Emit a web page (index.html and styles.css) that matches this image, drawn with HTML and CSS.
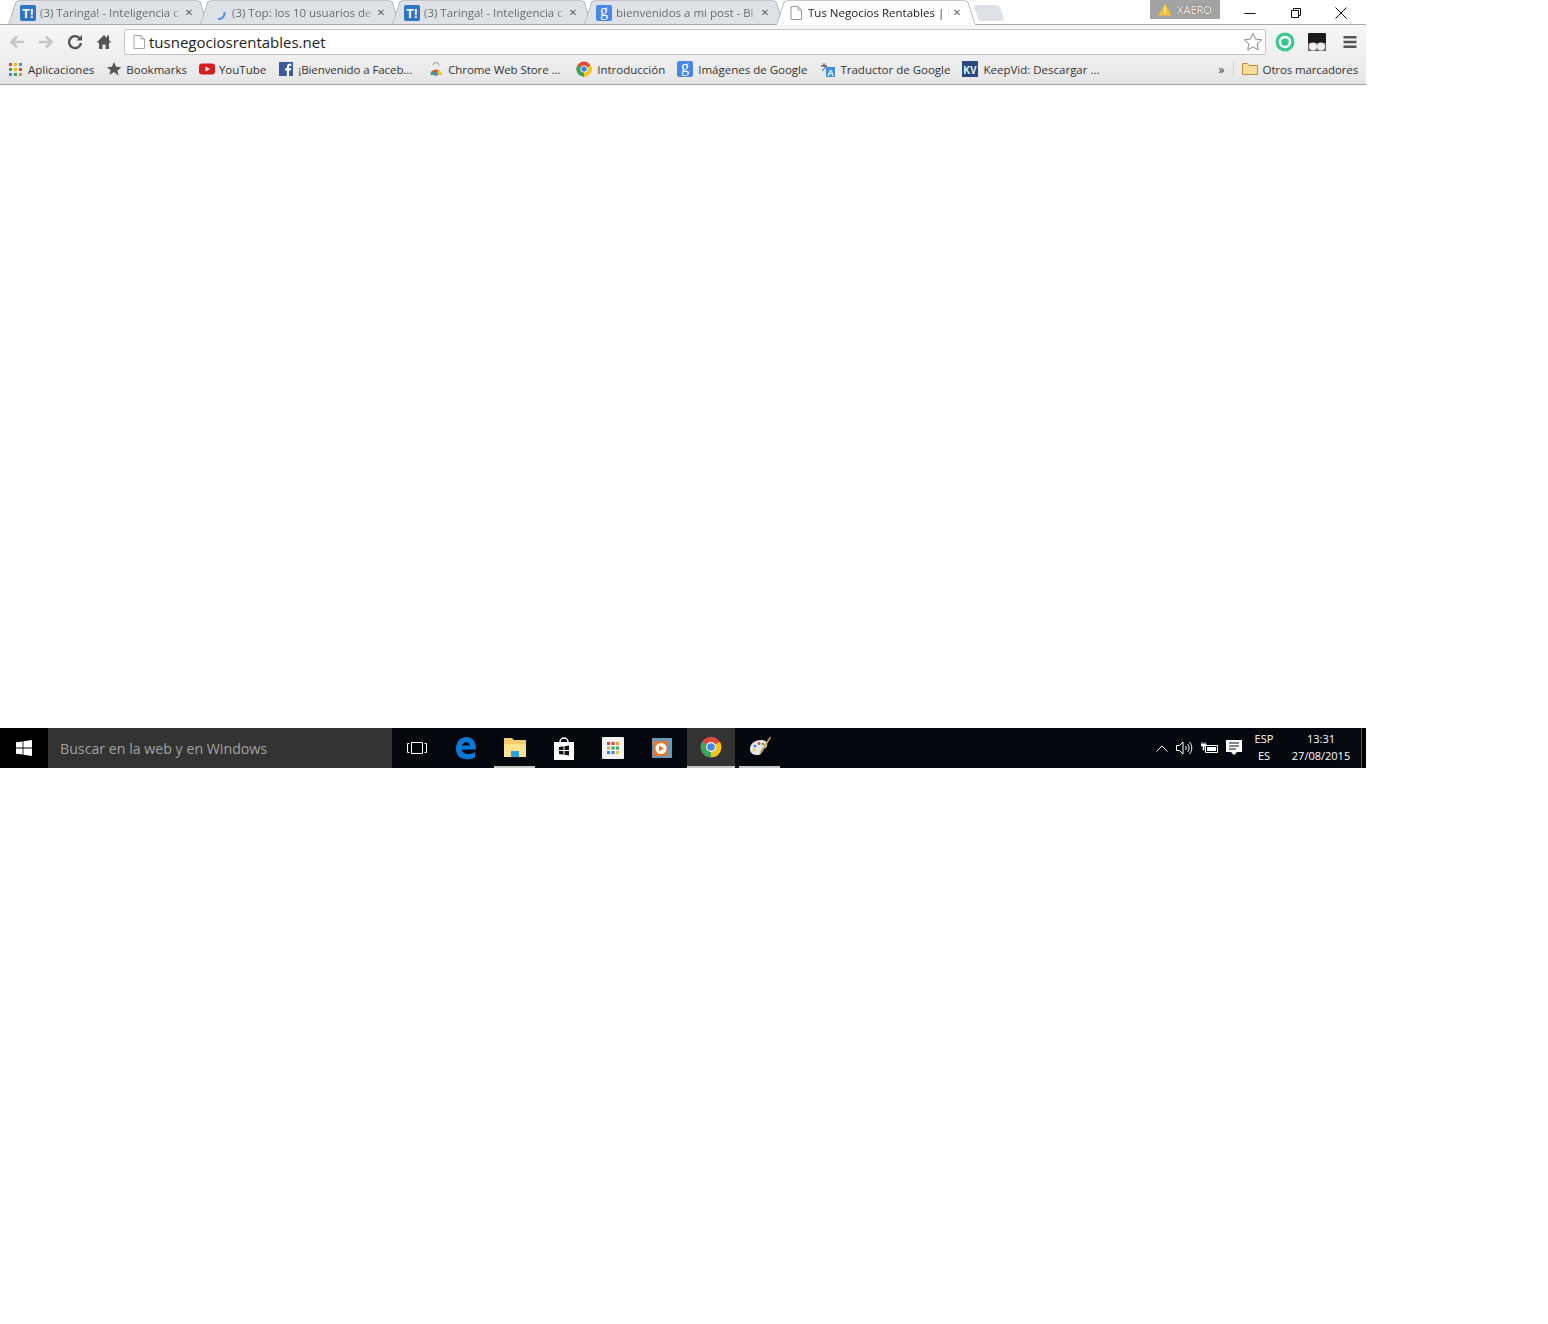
FILE: index.html
```html
<!DOCTYPE html>
<html lang="es">
<head>
    <meta charset="UTF-8">
    <meta name="viewport" content="width=device-width, initial-scale=1.0">
    <title>Tus Negocios Rentables</title>
    <link rel="stylesheet" href="styles.css">
</head>
<body>
    <svg class="defs" width="0" height="0">
        <symbol id="fav-t" viewBox="0 0 16 16">
            <rect width="16" height="16" rx="2" fill="#2f74c0"/>
            <text x="8" y="12.500" text-anchor="middle" font-family="Liberation Sans, sans-serif" font-weight="700" font-size="12" fill="#fff">T!</text>
        </symbol>
        <symbol id="fav-g" viewBox="0 0 16 16">
            <rect width="16" height="16" rx="2" fill="#4a86e8"/>
            <text x="8" y="11" text-anchor="middle" font-family="Liberation Serif, serif" font-size="16" fill="#fff">g</text>
        </symbol>
        <symbol id="fav-doc" viewBox="0 0 16 16">
            <path d="M3 1.500h7l3.500 3.500v9.500h-10.500z M10 1.500v3.500h3.500" fill="#fff" stroke="#9a9a9a"/>
        </symbol>
        <symbol id="fav-chrome" viewBox="0 0 16 16">
            <circle cx="8" cy="8" r="7.500" fill="#dd4b39"/>
            <path d="M8 8L1.500 4.200A7.500 7.500 0 0 0 8 15.500z" fill="#3ba55c"/>
            <path d="M8 8L14.500 4.200A7.500 7.500 0 0 1 8 15.500z" fill="#f5c518"/>
            <circle cx="8" cy="8" r="3.600" fill="#fff"/>
            <circle cx="8" cy="8" r="2.800" fill="#4a86e8"/>
        </symbol>
    </svg>

    <div class="screen">
        <header class="browser">
            <div class="tabstrip">
                <div class="tab">
                    <svg class="fav"><use href="#fav-t"/></svg>
                    <span class="tab-title">(3) Taringa! - Inteligencia c</span>
                    <span class="tab-close">&#10005;</span>
                </div>
                <div class="tab">
                    <svg class="fav" viewBox="0 0 16 16"><path d="M12.500 7A6 6 0 0 1 6 14" fill="none" stroke="#4a86e8" stroke-width="2"/></svg>
                    <span class="tab-title">(3) Top: los 10 usuarios de</span>
                    <span class="tab-close">&#10005;</span>
                </div>
                <div class="tab">
                    <svg class="fav"><use href="#fav-t"/></svg>
                    <span class="tab-title">(3) Taringa! - Inteligencia c</span>
                    <span class="tab-close">&#10005;</span>
                </div>
                <div class="tab">
                    <svg class="fav"><use href="#fav-g"/></svg>
                    <span class="tab-title">bienvenidos a mi post - Bl</span>
                    <span class="tab-close">&#10005;</span>
                </div>
                <div class="tab active">
                    <svg class="fav"><use href="#fav-doc"/></svg>
                    <span class="tab-title">Tus Negocios Rentables | I</span>
                    <span class="tab-close">&#10005;</span>
                </div>
                <div class="new-tab"></div>

                <div class="user-badge">
                    <svg width="14" height="13" viewBox="0 0 14 13"><path d="M7 0.500L13.500 12.500H0.500z" fill="#f2c230"/><path d="M6.500 4h1v5h-1z M6.500 10h1v1h-1z" fill="#fff"/></svg>
                    <span>XAERO</span>
                </div>
                <div class="win-controls">
                    <svg width="12" height="12" viewBox="0 0 12 12"><path d="M0.500 6.500h11" stroke="#111" fill="none"/></svg>
                    <svg width="12" height="12" viewBox="0 0 12 12"><path d="M1.500 3.500h7v7h-7z M3.500 3.500v-2h7v7h-2" stroke="#111" fill="none"/></svg>
                    <svg width="12" height="12" viewBox="0 0 12 12"><path d="M0.500 0.500l11 11 M11.500 0.500l-11 11" stroke="#111" fill="none"/></svg>
                </div>
            </div>

            <div class="toolbar">
                <div class="nav-buttons">
                    <svg class="nav-btn" viewBox="0 0 18 18"><path d="M16 9H4 M9 3.500L3.500 9 9 14.500" fill="none" stroke="#c6c6c6" stroke-width="2.600"/></svg>
                    <svg class="nav-btn" viewBox="0 0 18 18"><path d="M2 9h12 M9 3.500L14.500 9 9 14.500" fill="none" stroke="#c6c6c6" stroke-width="2.600"/></svg>
                    <svg class="nav-btn" viewBox="0 0 18 18"><path d="M14.200 6A6 6 0 1 0 15 10" fill="none" stroke="#555" stroke-width="2.400"/><path d="M10.500 7.500h5.500v-5.500z" fill="#555"/></svg>
                    <svg class="nav-btn" viewBox="0 0 18 18"><path d="M9 2L1.500 9.500H4V16h3.500v-4.500h3V16H14V9.500h2.500L14 7V2.500h-2v2.500z" fill="#555"/></svg>
                </div>
                <div class="omnibox">
                    <svg class="fav" viewBox="0 0 16 16"><path d="M3 1.500h7l3.500 3.500v9.500h-10.500z M10 1.500v3.500h3.500" fill="#fff" stroke="#a5a5a5"/></svg>
                    <span class="url">tusnegociosrentables.net</span>
                    <svg class="star" width="20" height="20" viewBox="0 0 20 20"><path d="M10 1.500l2.600 5.600 6 .7-4.500 4.100 1.200 6-5.300-3-5.300 3 1.200-6L1.400 7.800l6-.7z" fill="#fff" stroke="#8a8a8a"/></svg>
                </div>
                <div class="extensions">
                    <svg width="20" height="20" viewBox="0 0 20 20"><circle cx="10" cy="10" r="9.500" fill="#3cc78f"/><circle cx="10" cy="10" r="5" fill="none" stroke="#fff" stroke-width="2.400"/></svg>
                    <svg class="ext-dark" width="18" height="18" viewBox="0 0 18 18"><rect width="18" height="18" rx="1" fill="#1c1c1c"/><rect y="10" width="18" height="8" fill="#666"/><circle cx="5" cy="13.500" r="4" fill="#eee"/><circle cx="13" cy="13.500" r="4" fill="#eee"/></svg>
                    <svg width="14" height="14" viewBox="0 0 14 14"><path d="M0.500 1h13v2.400h-13z M0.500 5.800h13v2.400h-13z M0.500 10.600h13v2.400h-13z" fill="#555"/></svg>
                </div>
            </div>

            <nav class="bookmarks">
                <a class="bookmark">
                    <svg class="fav" viewBox="0 0 16 16"><path d="M1 2h3v3H1z M11 7h3v3h-3z" fill="#dd4b39"/><path d="M6 2h3v3H6z M6 7h3v3H6z" fill="#f5b400"/><path d="M11 2h3v3h-3z M1 12h3v3H1z" fill="#4a86e8"/><path d="M1 7h3v3H1z M6 12h3v3H6z" fill="#3ba55c"/><path d="M11 12h3v3h-3z" fill="#e9843b"/></svg>
                    Aplicaciones
                </a>
                <a class="bookmark">
                    <svg class="fav" viewBox="0 0 16 16"><path d="M8 1l2.100 4.800 5.200.5-3.900 3.400 1.200 5.100L8 11.100 3.400 14l1.200-5.100L.7 6.300l5.200-.5z" fill="#555"/></svg>
                    Bookmarks
                </a>
                <a class="bookmark">
                    <svg class="fav" viewBox="0 0 16 16"><rect y="2.500" width="16" height="11" rx="3" fill="#d3201f"/><path d="M6.500 5.500L11 8l-4.500 2.500z" fill="#fff"/></svg>
                    YouTube
                </a>
                <a class="bookmark truncated">
                    <svg class="fav" viewBox="0 0 16 16"><rect x="1" y="1" width="14" height="14" fill="#3b5998"/><path d="M11 15V9.500h2l.3-2.200H11V6c0-.7.300-1.100 1.100-1.100h1.300V3c-1.900-.3-4.500-.3-4.500 2.700v1.600H7v2.200h1.900V15z" fill="#fff"/></svg>
                    ¡Bienvenido a Faceb...
                </a>
                <a class="bookmark truncated">
                    <svg class="fav" viewBox="0 0 16 16"><path d="M5 4.500a3 3 0 0 1 6 0" fill="none" stroke="#999"/><path d="M2 5h12l1 9H1z" fill="#eee"/><path d="M2.500 14a5.500 5.500 0 0 1 11 0z" fill="#dd4b39"/><path d="M2.500 14a5.500 5.500 0 0 1 3-5l2 5z" fill="#3ba55c"/><path d="M8 14l2-5a5.500 5.500 0 0 1 3.500 5z" fill="#f5c518"/><circle cx="8" cy="13" r="2" fill="#4a86e8"/></svg>
                    Chrome Web Store ...
                </a>
                <a class="bookmark roomy">
                    <svg class="fav"><use href="#fav-chrome"/></svg>
                    Introducción
                </a>
                <a class="bookmark roomy">
                    <svg class="fav"><use href="#fav-g"/></svg>
                    Imágenes de Google
                </a>
                <a class="bookmark roomy">
                    <svg class="fav" viewBox="0 0 16 16"><path d="M1 2h8v9H1z" fill="#dfe6ef"/><path d="M7 6h9v10H7z" fill="#3f8fe0"/><path d="M2 5h6 M5 2.500v2.500 M3 9.500c2-1 3-2.500 4-4.500" stroke="#333" fill="none"/><text x="11.500" y="14.500" text-anchor="middle" font-family="Liberation Sans, sans-serif" font-weight="700" font-size="9" fill="#fff">A</text></svg>
                    Traductor de Google
                </a>
                <a class="bookmark roomy">
                    <svg class="fav" viewBox="0 0 16 16"><rect width="16" height="16" fill="#2a4a80"/><text x="8" y="13" text-anchor="middle" font-family="Liberation Sans, sans-serif" font-weight="700" font-size="11" textLength="13" lengthAdjust="spacingAndGlyphs" fill="#fff">KV</text></svg>
                    KeepVid: Descargar ...
                </a>
                <span class="more">»</span>
                <span class="separator"></span>
                <a class="bookmark other">
                    <svg class="fav" viewBox="0 0 16 16"><path d="M0.500 13.500v-11h5l1.500 2h8.500v9z" fill="#f7dc9b" stroke="#b98d3e"/></svg>
                    Otros marcadores
                </a>
            </nav>
        </header>

        <main class="viewport"></main>

        <footer class="taskbar">
            <div class="start">
                <svg width="16" height="16" viewBox="0 0 16 16"><path d="M0 2.300l6.600-.9v6.200H0z M7.400 1.300L16 0v7.600H7.400z M0 8.400h6.600v6.200L0 13.700z M7.400 8.400H16V16l-8.600-1.300z" fill="#fff"/></svg>
            </div>
            <div class="search">Buscar en la web y en Windows</div>
            <div class="task-apps">
                <div class="task-app">
                    <svg width="20" height="14" viewBox="0 0 20 14"><path d="M4.500 1.500h11v11h-11z" fill="none" stroke="#fff"/><path d="M2.500 2.500H.5v9h2 M17.500 2.500h2v9h-2" fill="none" stroke="#fff"/></svg>
                </div>
                <div class="task-app">
                    <svg width="22" height="24" viewBox="0 0 22 24"><path d="M1 13C1 5 6 1 11.500 1 17.500 1 21 5.500 21 13.500H7c.2 5 7.500 6 13 2.500v5.500c-7 3.500-19 2.300-19-8.500zM7 9.500h8c0-4.500-7.500-4.500-8 0z" fill="#0a78d6"/></svg>
                </div>
                <div class="task-app running">
                    <svg width="22" height="20" viewBox="0 0 22 20"><path d="M0 1h8l2 2h12v17H0z" fill="#f5cd6c"/><path d="M0 7h22v13H0z" fill="#fde28e"/><path d="M7 14h8v6H7z" fill="#27a4dd"/></svg>
                </div>
                <div class="task-app">
                    <svg width="22" height="24" viewBox="0 0 22 24"><path d="M7 6a4 4 0 0 1 8 0" fill="none" stroke="#fff" stroke-width="1.500"/><path d="M1 6h20v18H1z" fill="#fff"/><path d="M6 11l4.500-.7V14H6z M11.500 10.200L16 9.500V14h-4.500z M6 15h4.500v3.700L6 18z M11.500 15H16v4.500l-4.500-.7z" fill="#111"/></svg>
                </div>
                <div class="task-app">
                    <svg width="22" height="22" viewBox="0 0 22 22"><rect width="22" height="22" rx="1" fill="#f2f2f2"/><path d="M5 5h3v3H5z M9.500 5h3v3h-3z" fill="#d9433b"/><path d="M14 5h3v3h-3z M5 9.500h3v3H5z" fill="#e9a23b"/><path d="M9.500 9.500h3v3h-3z M14 9.500h3v3h-3z" fill="#3ba55c"/><path d="M5 14h3v3H5z M9.500 14h3v3h-3z" fill="#2f8fd6"/><path d="M14 14h3v3h-3z" fill="#e9c83b"/></svg>
                </div>
                <div class="task-app">
                    <svg width="20" height="20" viewBox="0 0 20 20"><rect width="20" height="20" fill="#6a98b8"/><rect x="2" y="3" width="14" height="15" fill="#e8792c"/><circle cx="9" cy="10.500" r="5.500" fill="#fff"/><path d="M7 7.500l5 3-5 3z" fill="#e8792c"/></svg>
                </div>
                <div class="task-app running active">
                    <svg width="22" height="22"><use href="#fav-chrome" width="22" height="22"/></svg>
                </div>
                <div class="task-app running">
                    <svg width="24" height="24" viewBox="0 0 24 24"><path d="M2 14C2 8 8 5 13 5c5 0 7 3 6 6-1 3-4 2-5 4-1 2 0 5-4 5-4 0-8-1-8-6z" fill="#e6e6e6"/><circle cx="7" cy="11" r="1.500" fill="#4a86e8"/><circle cx="11" cy="8.500" r="1.500" fill="#dd4b39"/><circle cx="15" cy="9" r="1.300" fill="#3ba55c"/><circle cx="6" cy="15" r="1.300" fill="#f5c518"/><path d="M22 1.500l1 1-9 15-2.500 2 .5-3z" fill="#c9a45c"/></svg>
                </div>
            </div>
            <div class="tray">
                <svg width="12" height="7" viewBox="0 0 12 7"><path d="M0.500 6.500L6 1l5.500 5.500" fill="none" stroke="#fff"/></svg>
                <svg width="17" height="14" viewBox="0 0 17 14"><path d="M0.500 4.500h3l3.500-3.500v12l-3.500-3.500h-3z M9.500 5c1 1 1 3 0 4 M11.500 3c2 2 2 6 0 8 M13.500 1c3 3 3 9 0 12" fill="none" stroke="#fff"/></svg>
                <svg width="17" height="12" viewBox="0 0 17 12"><path d="M4.500 3.500h12v7h-12z" fill="none" stroke="#fff"/><path d="M6 5h9v4H6z" fill="#fff"/><path d="M1 0v2 M4 0v2 M0 2h5v2H3v4H2V4H0z" stroke="#fff" stroke-width=".7" fill="#fff"/></svg>
                <svg width="16" height="16" viewBox="0 0 16 16"><path d="M0 0h16v12h-5l-3 3-3-3H0z" fill="#fff"/><path d="M3 3h10 M3 6h10 M3 9h7" stroke="#111" fill="none"/></svg>
            </div>
            <div class="lang">
                <span>ESP</span>
                <span>ES</span>
            </div>
            <div class="clock">
                <span>13:31</span>
                <span>27/08/2015</span>
            </div>
            <div class="show-desktop"></div>
        </footer>
    </div>
</body>
</html>
```

FILE: styles.css
```css
:root {
    --tab-color: #dee2e7;
    --tab-border: #a9abae;
    --ui-font: "Open Sans", "Noto Sans", sans-serif;
}

* {
    margin: 0;
    padding: 0;
    box-sizing: border-box;
}

body {
    background: #fff;
    font-family: var(--ui-font);
}

.defs {
    display: none;
}

.screen {
    width: 1366px;
    height: 768px;
    display: flex;
    flex-direction: column;
}

.fav {
    width: 16px;
    height: 16px;
    flex: none;
}

/* Tabs */
.tabstrip {
    height: 25px;
    padding-left: 8px;
    display: flex;
    align-items: flex-start;
    border-bottom: 1px solid var(--tab-border);
}

.tab {
    position: relative;
    isolation: isolate;
    width: 200px;
    height: 24px;
    margin-right: -8px;
    padding: 1px 13px 0 12px;
    display: flex;
    align-items: center;
    gap: 4px;
    font-size: 11.5px;
    color: #6b6b6b;
}

.tab::before,
.tab::after {
    content: "";
    position: absolute;
    top: 0;
    bottom: 0;
    width: 55%;
    z-index: -1;
    background: var(--tab-color);
    border-top: 1px solid #c3c6ca;
}

.tab::before {
    left: 0;
    transform-origin: bottom left;
    transform: skewX(-18deg);
    border-left: 1px solid var(--tab-border);
    border-top-left-radius: 4px;
}

.tab::after {
    right: 0;
    transform-origin: bottom right;
    transform: skewX(18deg);
    border-right: 1px solid var(--tab-border);
    border-top-right-radius: 4px;
}

.tab.active {
    z-index: 2;
    height: 25px;
    margin-bottom: -1px;
    padding-bottom: 1px;
    color: #222;
}

.tab.active::before,
.tab.active::after {
    background: #fff;
}

.tab-title {
    flex: 1;
    min-width: 0;
    white-space: nowrap;
    overflow: hidden;
    -webkit-mask-image: linear-gradient(to right, #000 93%, transparent 100%);
    mask-image: linear-gradient(to right, #000 93%, transparent 100%);
}

.tab-close {
    width: 12px;
    margin-left: -3px;
    flex: none;
    font-size: 10px;
    line-height: 12px;
    font-weight: 700;
    font-family: "DejaVu Sans", sans-serif;
    color: #666;
    text-align: center;
}

.new-tab {
    width: 26px;
    height: 16px;
    margin: 5px 0 0 8px;
    background: var(--tab-color);
    border-radius: 3px;
    transform: skewX(18deg);
}

.user-badge {
    width: 70px;
    height: 19px;
    margin-left: auto;
    padding-bottom: 1px;
    display: flex;
    align-items: center;
    justify-content: center;
    gap: 5px;
    background: #a3a3a3;
    color: #fff;
    font-size: 11px;
    text-shadow: 0 0 1px #333;
}

.win-controls {
    width: 146px;
    height: 25px;
    padding: 1px 19px 0 24px;
    display: flex;
    align-items: center;
    justify-content: space-between;
}

/* Toolbar */
.toolbar {
    height: 32px;
    display: flex;
    align-items: center;
    padding: 2px 8px 0;
    background: linear-gradient(#f6f6f6, #efefef);
}

.nav-buttons {
    display: flex;
    gap: 11px;
    margin-right: 11px;
}

.nav-btn {
    width: 18px;
    height: 18px;
}

.omnibox {
    flex: 1;
    height: 26px;
    padding: 0 2px 0 6px;
    display: flex;
    align-items: center;
    gap: 2px;
    background: #fff;
    border: 1px solid #c4c4c4;
    border-radius: 2px;
}

.url {
    flex: 1;
    font-size: 15px;
    color: #222;
}

.extensions {
    width: 92px;
    display: flex;
    align-items: center;
    justify-content: space-between;
    padding: 0 1px 0 9px;
}

.ext-dark {
    margin-right: 4px;
}

/* Bookmarks */
.bookmarks {
    height: 28px;
    padding: 0 8px 3px;
    display: flex;
    align-items: center;
    gap: 12px;
    background: linear-gradient(#efefef, #e6e6e6);
    border-bottom: 1px solid #a0a0a0;
}

.bookmark {
    display: flex;
    align-items: center;
    gap: 4px;
    font-size: 11.5px;
    color: #333;
    white-space: nowrap;
}

.bookmark.truncated {
    margin-right: 4px;
    letter-spacing: -0.08px;
}

.bookmark.roomy {
    gap: 5px;
}

.bookmark.other {
    gap: 5px;
    letter-spacing: -0.12px;
}

.more {
    margin-left: auto;
    font-size: 12px;
    color: #333;
}

.separator {
    width: 1px;
    height: 14px;
    margin: 0 -4px;
    background: #d4d4d4;
}

.viewport {
    flex: 1;
    background: #fff;
}

/* Taskbar */
.taskbar {
    height: 40px;
    display: flex;
    align-items: stretch;
    color: #fff;
    background: linear-gradient(to right, #03070c, #05090f);
}

.start {
    width: 48px;
    display: flex;
    align-items: center;
    justify-content: center;
    background: #000;
}

.search {
    width: 344px;
    padding-left: 12px;
    display: flex;
    align-items: center;
    background: #333;
    color: #a2a2a2;
    font-size: 14.2px;
}

.task-apps {
    display: flex;
    flex: 1;
}

.task-app {
    width: 49px;
    display: flex;
    align-items: center;
    justify-content: center;
}

.task-app.running {
    border-bottom: 2px solid #c8c8c8;
    margin: 0 4px;
    width: 41px;
}

.task-app.active {
    width: 48px;
    margin: 0 0 0 1px;
    background: #333;
}

.tray {
    display: flex;
    align-items: center;
    gap: 8px;
    padding-right: 7px;
}

.lang,
.clock {
    display: flex;
    flex-direction: column;
    justify-content: center;
    align-items: center;
    font-size: 11px;
    line-height: 17px;
    padding-bottom: 2px;
}

.lang {
    width: 30px;
    margin-right: 2px;
}

.clock {
    width: 80px;
}

.show-desktop {
    width: 5px;
    border-left: 1px solid #555;
    background: #000;
}
```
